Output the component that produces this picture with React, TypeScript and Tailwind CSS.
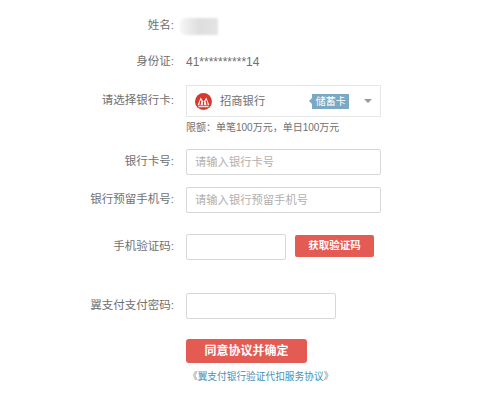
const Row = ({ label, className, children }: { label: string; className: string; children: React.ReactNode }) => (
  <div className={`flex items-center ${className}`}>
    <label className="w-[174px] shrink-0 text-right text-[11.5px] text-[#707070]">{label}</label>
    <div className="ml-[12px] flex items-center">{children}</div>
  </div>
);

const Field = ({ width, placeholder }: { width: string; placeholder?: string }) => (
  <input
    className={`${width} h-[26px] rounded-[2px] border border-[#d8d8d8] bg-white px-2 text-[11.3px] placeholder:text-[#b0b0b0]`}
    placeholder={placeholder}
  />
);

const BankLogo = () => (
  <svg width="17" height="17" viewBox="0 0 17 17">
    <circle cx="8.5" cy="8.5" r="8.5" fill="#d8392f" />
    <path d="M2.6 12.2 L5.7 4.6 L8.5 9 L11.3 4.6 L14.4 12.2 Z" fill="#fff" />
    <path d="M5.9 7.5 L4.9 12.2 M8.5 9 L8.5 12.2 M11.1 7.5 L12.1 12.2" stroke="#d8392f" strokeWidth="1.3" fill="none" />
    <rect x="3.4" y="13.2" width="10.2" height="1" fill="#fff" />
  </svg>
);

export default function App() {
  return (
    <div className="relative h-[402px] w-[500px] overflow-hidden bg-white pt-[17px] font-['Liberation_Sans','Noto_Sans_CJK_SC',sans-serif]">
      <Row label="姓名:" className="h-[18px]">
        <div className="ml-[-6px] h-[17px] w-[38px] rounded-l-[6px] bg-gradient-to-r from-[#f6f6f6] via-[#dedede] to-[#e4e4e4] blur-[1px]" />
      </Row>
      <Row label="身份证:" className="mt-[18px] h-[18px]">
        <span className="text-[12px] text-[#707070]">41**********14</span>
      </Row>
      <Row label="请选择银行卡:" className="mt-[14px] h-[32px]">
        <div className="flex h-[32px] w-[195px] items-center border border-[#e6e6e6] pl-[8px]">
          <BankLogo />
          <span className="ml-[8px] text-[11.3px] text-[#707070]">招商银行</span>
          <span className="relative ml-[47px] flex h-[15px] w-[37px] items-center justify-center bg-[#7ba9c4] text-[10px] text-white">
            <span className="absolute left-[-3px] top-[4px] h-0 w-0 border-y-[3px] border-r-[3px] border-y-transparent border-r-[#7ba9c4]" />
            储蓄卡
          </span>
          <span className="ml-[15px] h-0 w-0 border-x-[4px] border-t-[4px] border-x-transparent border-t-[#999]" />
        </div>
      </Row>
      <div className="ml-[186px] mt-[3px] h-[16px] text-[10px] leading-[16px] text-[#707070]">限额：单笔100万元，单日100万元</div>
      <Row label="银行卡号:" className="mt-[13px] h-[26px]">
        <Field width="w-[195px]" placeholder="请输入银行卡号" />
      </Row>
      <Row label="银行预留手机号:" className="mt-[12px] h-[26px]">
        <Field width="w-[195px]" placeholder="请输入银行预留手机号" />
      </Row>
      <Row label="手机验证码:" className="mt-[21px] h-[26px]">
        <Field width="w-[100px]" />
        <button className="mb-[2px] ml-[9px] h-[22px] w-[79px] rounded-[2px] bg-[#e35b52] text-[10.5px] font-bold text-white">获取验证码</button>
      </Row>
      <Row label="翼支付支付密码:" className="mt-[33px] h-[26px]">
        <Field width="w-[150px]" />
      </Row>
      <button className="ml-[186px] mt-[20px] block h-[24px] w-[121px] rounded-[3px] bg-[#e35b52] text-[12px] font-bold text-white">同意协议并确定</button>
      <a className="ml-[188px] mt-[6px] block text-[9.7px] leading-[16px] text-[#4a8fb5]">
        <span className="text-[#888]">《</span>翼支付银行验证代扣服务协议<span className="text-[#888]">》</span>
      </a>
    </div>
  );
}
